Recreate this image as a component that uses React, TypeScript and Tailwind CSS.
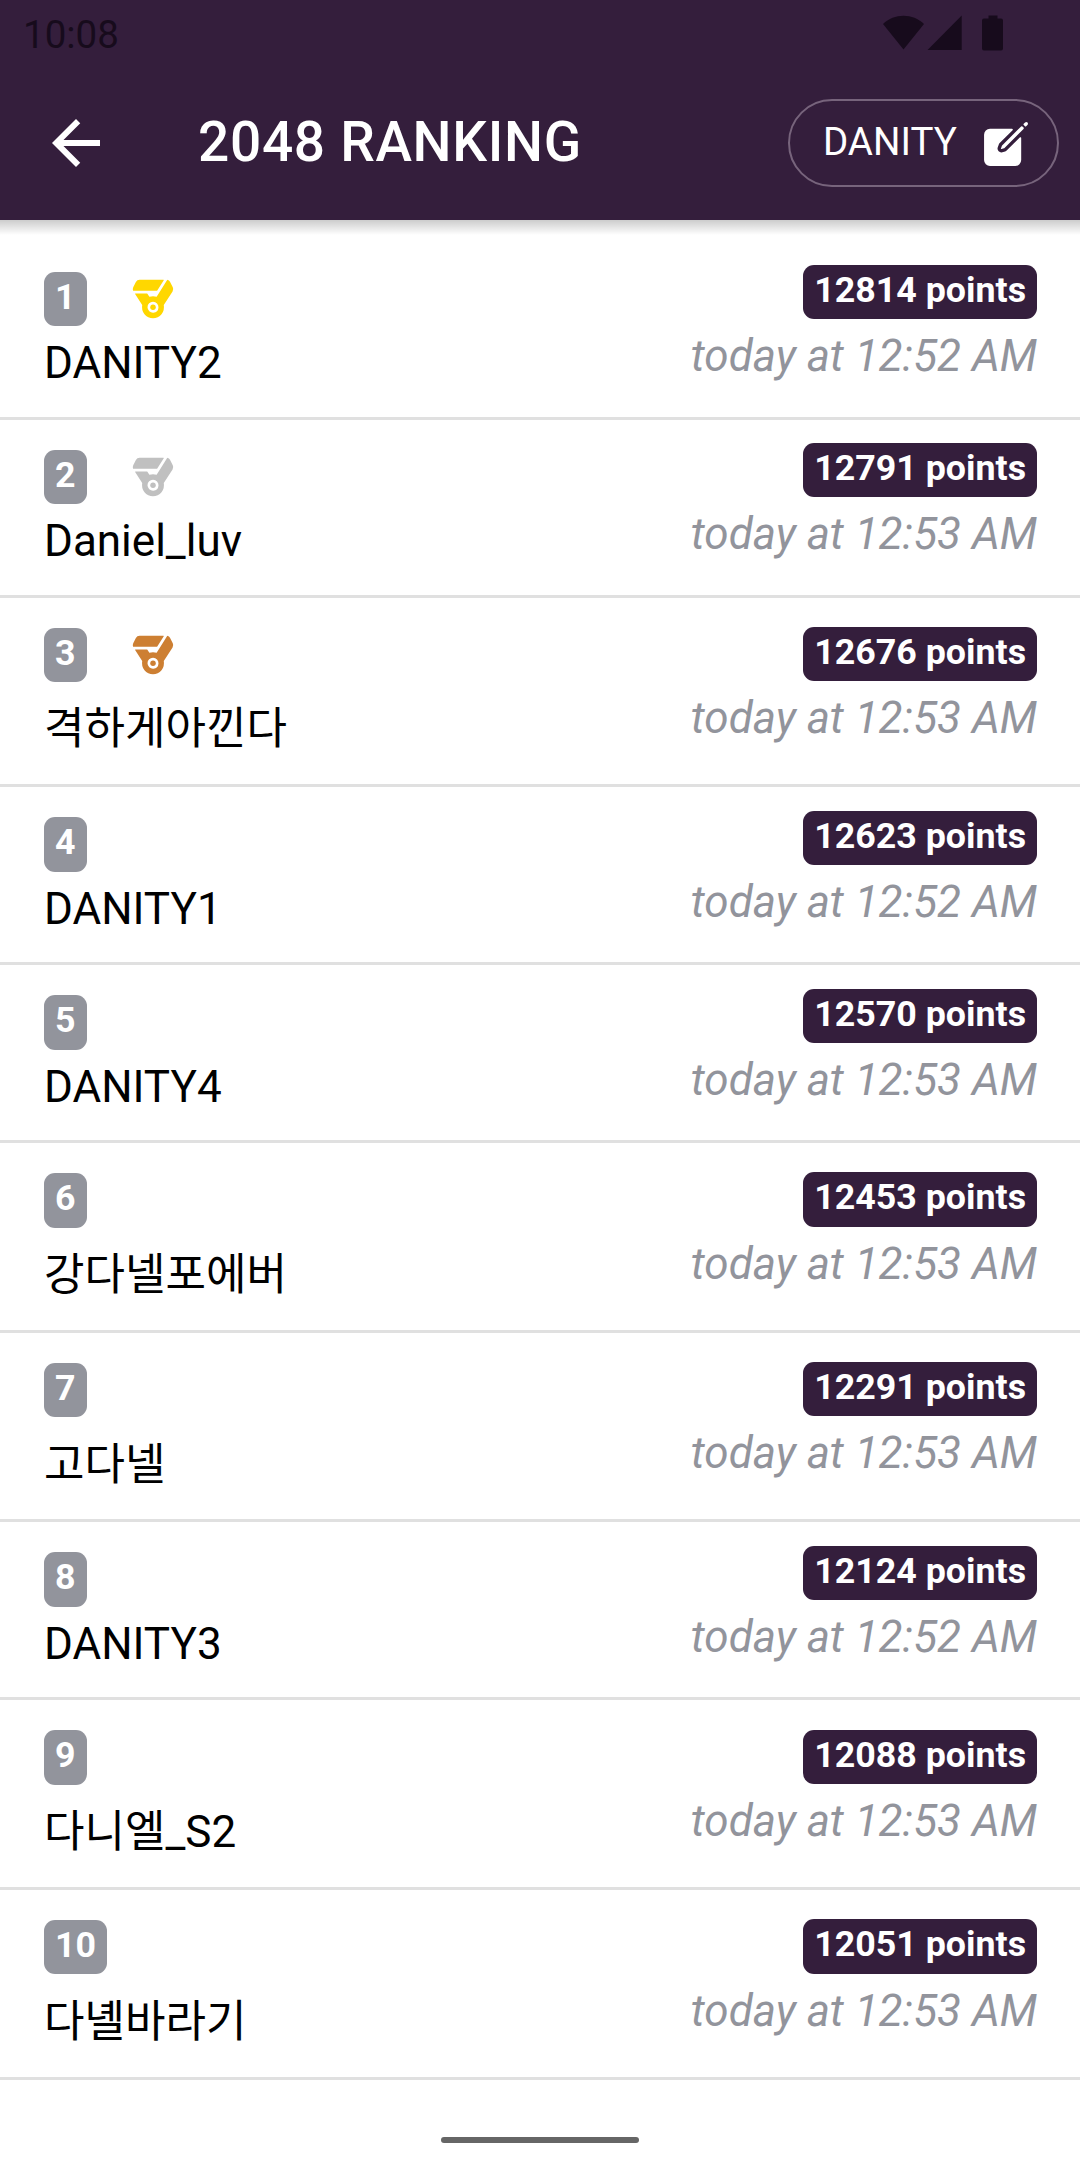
import { IoCreate, IoMedal } from 'react-icons/io5';
import { MdArrowBack } from 'react-icons/md';

type Entry = {
  name: string;
  points: number;
  time: string;
};

const entries: Entry[] = [
  { name: 'DANITY2', points: 12814, time: 'today at 12:52 AM' },
  { name: 'Daniel_luv', points: 12791, time: 'today at 12:53 AM' },
  { name: '격하게아낀다', points: 12676, time: 'today at 12:53 AM' },
  { name: 'DANITY1', points: 12623, time: 'today at 12:52 AM' },
  { name: 'DANITY4', points: 12570, time: 'today at 12:53 AM' },
  { name: '강다넬포에버', points: 12453, time: 'today at 12:53 AM' },
  { name: '고다넬', points: 12291, time: 'today at 12:53 AM' },
  { name: 'DANITY3', points: 12124, time: 'today at 12:52 AM' },
  { name: '다니엘_S2', points: 12088, time: 'today at 12:53 AM' },
  { name: '다녤바라기', points: 12051, time: 'today at 12:53 AM' },
];

const medalColors = ['text-[#ffd700]', 'text-[#c0c0c0]', 'text-[#cd7f32]'];

// Hangul names need a taller line, which makes the whole row taller
const hasHangul = (s: string) => /[\uac00-\ud7a3]/.test(s);

function StatusBar() {
  return (
    <div className="h-[66px] flex items-start justify-between pl-[23px] pr-[77px] text-[#170b1c]">
      <span className="mt-[12px] text-[38.5px] leading-[46px]">10:08</span>
      <svg className="mt-[15px]" width="120" height="36" viewBox="0 0 120 36" fill="currentColor">
        <path d="M0 9C11-2 30-2 41 9L20.5 34.5Z" />
        <path d="M78.7 .5V35H44.5Z" />
        <path d="M105.5 .5h9v3h3.5q2 0 2 2v28q0 2-2 2h-17q-2 0-2-2v-28q0-2 2-2h4.5z" />
      </svg>
    </div>
  );
}

function Header() {
  return (
    <header className="relative z-10 h-[220px] bg-[#341e3c]">
      <StatusBar />
      <div className="h-[154px] flex items-center pl-[40px] pr-[21px] text-white">
        <MdArrowBack className="size-[72px]" />
        <h1 className="ml-[86px] mb-[2px] text-[55px] leading-[64px] font-medium tracking-[0.0125em]">2048 RANKING</h1>
        <button className="ml-auto h-[88px] w-[271px] rounded-full border-2 border-[#77647c] flex items-center pl-[33px]">
          <span className="mb-[2px] text-[38.5px] leading-[46px]">DANITY</span>
          <IoCreate className="ml-[22px] mt-[1px] size-[54px]" />
        </button>
      </div>
      <div className="absolute inset-x-0 top-full h-[15px] bg-linear-to-b from-black/20 to-transparent" />
    </header>
  );
}

function Row({ entry, rank }: { entry: Entry; rank: number }) {
  const tall = hasHangul(entry.name);

  return (
    <li className={`flex items-center justify-between pl-[44px] pr-[43px] border-b-3 border-[#e0e0e0] ${tall ? 'h-[189.6px]' : 'h-[178px]'}`}>
      <div className="self-start pt-[30px]">
        <div className="flex items-center">
          <span className="h-[54.4px] px-[11px] rounded-[11px] bg-[#92949c] text-white text-[35.75px] leading-[51px] font-bold">{rank}</span>
          {rank <= 3 && <IoMedal className={`ml-[44px] size-[44px] ${medalColors[rank - 1]}`} />}
        </div>
        <div className={`mt-[11.4px] text-[44px] text-black ${tall ? 'leading-[72px]' : 'leading-[52px]'}`}>{entry.name}</div>
      </div>
      <div className="flex flex-col items-end">
        <span className="h-[54.4px] px-[11px] rounded-[11px] bg-[#341e3c] text-white text-[35.75px] leading-[51px] font-bold">{entry.points} points</span>
        <span className="mt-[11px] mb-[11px] text-[44px] leading-[52px] italic text-[#92949c]">{entry.time}</span>
      </div>
    </li>
  );
}

export default function App() {
  return (
    <div className="w-[1080px] h-[2160px] flex flex-col bg-white overflow-hidden font-['Roboto','Noto_Sans_CJK_KR',sans-serif]">
      <Header />
      <ul className="pt-[21.65px]">
        {entries.map((entry, i) => (
          <Row key={entry.name} entry={entry} rank={i + 1} />
        ))}
      </ul>
      <div className="mt-auto mb-[17px] mx-auto w-[198px] h-[6px] rounded-full bg-[#666666]" />
    </div>
  );
}
